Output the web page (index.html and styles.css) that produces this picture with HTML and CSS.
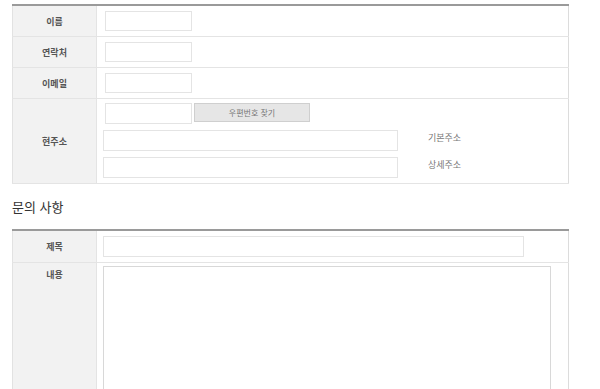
FILE: index.html
```html
<!DOCTYPE html>
<html lang="ko">
<head>
    <meta charset="UTF-8">
    <meta name="viewport" content="width=device-width, initial-scale=1.0">
    <title>문의하기</title>
    <link rel="stylesheet" href="styles.css">
</head>
<body>
    <div class="wrap">
        <table class="form-table">
            <tr>
                <th>이름</th>
                <td><input type="text" class="inp-short"></td>
            </tr>
            <tr>
                <th>연락처</th>
                <td><input type="text" class="inp-short"></td>
            </tr>
            <tr>
                <th>이메일</th>
                <td><input type="text" class="inp-short"></td>
            </tr>
            <tr>
                <th>현주소</th>
                <td class="addr-cell">
                    <div class="addr-line">
                        <input type="text" class="inp-short">
                        <button type="button" class="btn-zip">우편번호 찾기</button>
                    </div>
                    <div class="addr-line">
                        <input type="text" class="inp-addr">
                        <span class="addr-note">기본주소</span>
                    </div>
                    <div class="addr-line">
                        <input type="text" class="inp-addr">
                        <span class="addr-note">상세주소</span>
                    </div>
                </td>
            </tr>
        </table>

        <h2 class="section-title">문의 사항</h2>

        <table class="form-table">
            <tr>
                <th>제목</th>
                <td class="title-cell"><input type="text" class="inp-title"></td>
            </tr>
            <tr>
                <th class="top">내용</th>
                <td class="content-cell"><textarea class="inp-content"></textarea></td>
            </tr>
        </table>
    </div>
</body>
</html>
```

FILE: styles.css
```css
/* 기본 */
body {
    margin: 0;
    font-family: "Noto Sans CJK KR", "Noto Sans", sans-serif;
    color: #333;
    background: #fff;
}

.wrap {
    padding: 4px 0 0 12px;
    width: 557px;
}

/* 폼 테이블 */
.form-table {
    width: 557px;
    border-collapse: collapse;
    border-top: 2px solid #9a9a9a;
    border-left: 1px solid #e2e2e2;
    border-right: 1px solid #dcdcdc;
}

.form-table th {
    width: 83px;
    background: #f2f2f2;
    border-right: 1px solid #e4e4e4;
    border-bottom: 1px solid #e4e4e4;
    font-size: 9px;
    font-weight: bold;
    color: #555;
    text-align: center;
    padding: 0;
}

.form-table th.top {
    vertical-align: top;
    padding-top: 5px;
}

.form-table td {
    border-bottom: 1px solid #e4e4e4;
    padding: 5px 8px 5px 8px;
    height: 20px;
}

input,
textarea {
    box-sizing: border-box;
    border: 1px solid #e4e4e4;
    background: #fff;
    margin: 0;
    display: block;
}

.inp-short {
    width: 87px;
    height: 20px;
}

/* 주소 */
.form-table td.addr-cell {
    padding: 4px 6px 5px 6px;
}

.addr-line {
    display: flex;
    align-items: center;
    margin-bottom: 6px;
}

.addr-line:last-child {
    margin-bottom: 0;
}

.addr-line .inp-short {
    margin-left: 2px;
    height: 21px;
}

.btn-zip {
    width: 116px;
    height: 19px;
    margin: 0 0 2px 2px;
    background: #e6e6e6;
    border: 1px solid #cfcfcf;
    font-family: inherit;
    font-size: 8px;
    color: #777;
    padding: 0;
}

.inp-addr {
    width: 295px;
    height: 21px;
}

.addr-note {
    margin: 0 0 6px 30px;
    font-size: 9px;
    color: #777;
}

/* 문의 사항 */
.section-title {
    margin: 14px 0 13px;
    font-size: 13px;
    font-weight: normal;
    color: #333;
    line-height: 18px;
}

.form-table td.title-cell {
    padding: 5px 6px 5px 6px;
}

.inp-title {
    width: 421px;
    height: 21px;
}

.form-table td.content-cell {
    padding: 3px 6px 0 6px;
    vertical-align: top;
}

.inp-content {
    width: 448px;
    height: 160px;
    border-color: #d8d8d8;
    resize: none;
}
```
